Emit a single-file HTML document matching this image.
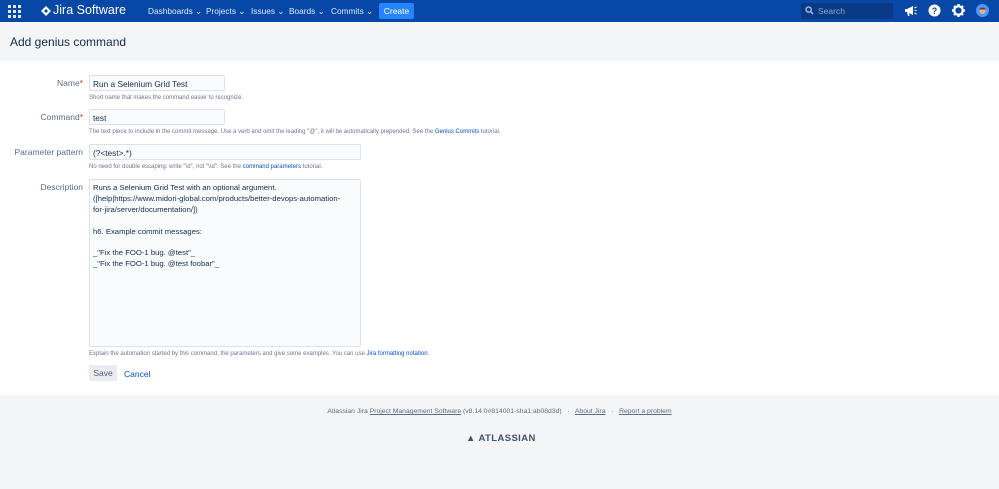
<!DOCTYPE html>
<html><head><meta charset="utf-8"><style>
*{margin:0;padding:0;box-sizing:border-box}
body{width:999px;height:489px;overflow:hidden;background:#fff;font-family:"Liberation Sans",sans-serif;color:#172b4d;position:relative}
.a{position:absolute}
.hdr{left:0;top:0;width:999px;height:22px;background:#0747a6}
.nav{color:#deebff;font-size:8.3px;top:6px}
.band{left:0;top:22px;width:999px;height:39px;background:#f4f5f7}
.lbl{font-size:8.5px;color:#5e6c84;text-align:right;width:83px;left:0}
.req{color:#de350b}
.inp{border:1px solid #dfe1e6;background:#fafbfc;border-radius:2px;font-size:8.3px;padding:3px 3px;color:#172b4d;left:89px}
.help{font-size:6px;color:#6b778c;left:89px}
.lnk{color:#0052cc}
.foot{left:0;top:395px;width:999px;height:94px;background:#f4f5f7}
</style></head><body>
<div class="a hdr"></div>
<svg class="a" style="left:8px;top:5px" width="13" height="13" viewBox="0 0 13 13" fill="#deebff">
<rect x="0" y="0" width="3" height="3"/><rect x="5" y="0" width="3" height="3"/><rect x="10" y="0" width="3" height="3"/>
<rect x="0" y="5" width="3" height="3"/><rect x="5" y="5" width="3" height="3"/><rect x="10" y="5" width="3" height="3"/>
<rect x="0" y="10" width="3" height="3"/><rect x="5" y="10" width="3" height="3"/><rect x="10" y="10" width="3" height="3"/></svg>
<svg class="a" style="left:41px;top:6px" width="10" height="10" viewBox="0 0 10 10"><path d="M5 0L10 5 5 10 0 5Z" fill="#fff"/><path d="M5 3L7 5 5 7 3 5Z" fill="#0747a6"/></svg>
<div class="a" style="left:53px;top:3px;color:#fff;font-size:12.5px">Jira Software</div>
<div class="a nav" style="left:148px">Dashboards ⌄</div>
<div class="a nav" style="left:206px">Projects ⌄</div>
<div class="a nav" style="left:251px">Issues ⌄</div>
<div class="a nav" style="left:289px">Boards ⌄</div>
<div class="a nav" style="left:331px">Commits ⌄</div>
<div class="a" style="left:379px;top:3px;width:35px;height:16px;background:#2684ff;border-radius:2px;color:#fff;font-size:8.5px;text-align:center;line-height:16px">Create</div>
<div class="a" style="left:801px;top:3px;width:92px;height:16px;background:#0a3a85;border-radius:2px;color:#8fa6cc;font-size:8.5px;line-height:16px;padding-left:17px">Search</div>
<svg class="a" style="left:805px;top:6px" width="9" height="9" viewBox="0 0 9 9"><circle cx="3.6" cy="3.6" r="2.6" stroke="#b3c3e0" stroke-width="1.3" fill="none"/><path d="M5.5 5.5L8 8" stroke="#b3c3e0" stroke-width="1.4"/></svg>
<svg class="a" style="left:904px;top:4px" width="13" height="13" viewBox="0 0 13 13"><path d="M1 5h2l6-3v9L3 8H1z" fill="#fff"/><path d="M3 8l1 4h1.5L5 8" fill="#fff"/><path d="M10.5 4l2-1M10.5 6.5h2M10.5 9l2 1" stroke="#fff"/></svg>
<svg class="a" style="left:928px;top:4px" width="13" height="13" viewBox="0 0 13 13"><circle cx="6.5" cy="6.5" r="6" fill="#fff"/><text x="6.5" y="10" font-size="9" font-weight="bold" text-anchor="middle" fill="#0747a6" font-family="Liberation Sans">?</text></svg>
<svg class="a" style="left:952px;top:4px" width="13" height="13" viewBox="0 0 13 13"><circle cx="6.5" cy="6.5" r="4.2" fill="none" stroke="#fff" stroke-width="2.2"/><g stroke="#fff" stroke-width="2.4"><path d="M6.5 0v3M6.5 10v3M0 6.5h3M10 6.5h3M2 2l2 2M9 9l2 2M2 11l2-2M9 4l2-2"/></g></svg>
<svg class="a" style="left:976px;top:4px" width="13" height="13" viewBox="0 0 13 13"><circle cx="6.5" cy="6.5" r="6.5" fill="#4c9aff"/><circle cx="6.5" cy="7" r="3" fill="#f3b07a"/><path d="M3 5.5Q6.5 1.5 10 5.5" fill="#5a3a1e"/></svg>
<div class="a band"></div>
<div class="a" style="left:10px;top:35px;font-size:12px;color:#172b4d">Add genius command</div>

<div class="a lbl" style="top:78px">Name<span class="req">*</span></div>
<div class="a inp" style="top:75px;width:136px;height:16px">Run a Selenium Grid Test</div>
<div class="a help" style="top:95px">Short name that makes the command easier to recognize.</div>

<div class="a lbl" style="top:112px">Command<span class="req">*</span></div>
<div class="a inp" style="top:109px;width:136px;height:16px">test</div>
<div class="a help" style="top:129px">The text piece to include in the commit message. Use a verb and omit the leading "@", it will be automatically prepended. See the <span class="lnk">Genius Commits</span> tutorial.</div>

<div class="a lbl" style="top:147px">Parameter pattern</div>
<div class="a inp" style="top:144px;width:272px;height:16px">(?&lt;test&gt;.*)</div>
<div class="a help" style="top:164px">No need for double escaping: write "\d", not "\\d". See the <span class="lnk">command parameters</span> tutorial.</div>

<div class="a lbl" style="top:182px">Description</div>
<div class="a inp" style="top:179px;width:272px;height:168px;line-height:10.9px;white-space:pre;font-size:7.7px">Runs a Selenium Grid Test with an optional argument.
([help|https://www.midori-global.com/products/better-devops-automation-
for-jira/server/documentation/])

h6. Example commit messages:

_"Fix the FOO-1 bug. @test"_
_"Fix the FOO-1 bug. @test foobar"_</div>
<div class="a help" style="top:351px">Explain the automation started by this command, the parameters and give some examples. You can use <span class="lnk">Jira formatting notation</span>.</div>

<div class="a" style="left:89px;top:365px;width:28px;height:16px;background:#ebecf0;border-radius:2px;font-size:8.5px;text-align:center;line-height:16px;color:#505f79">Save</div>
<div class="a lnk" style="left:124px;top:369px;font-size:8.5px">Cancel</div>

<div class="a foot"></div>
<div class="a" style="left:0;width:999px;top:408px;text-align:center;font-size:6.8px;color:#5e6c84">Atlassian Jira <u>Project Management Software</u> (v8.14.0#814001-sha1:ab08d3d) &nbsp; · &nbsp; <u>About Jira</u> &nbsp; · &nbsp; <u>Report a problem</u></div>
<div class="a" style="left:466px;top:433px;font-size:9.5px;font-weight:bold;color:#42526e;letter-spacing:.4px">▲ ATLASSIAN</div>
</body></html>
